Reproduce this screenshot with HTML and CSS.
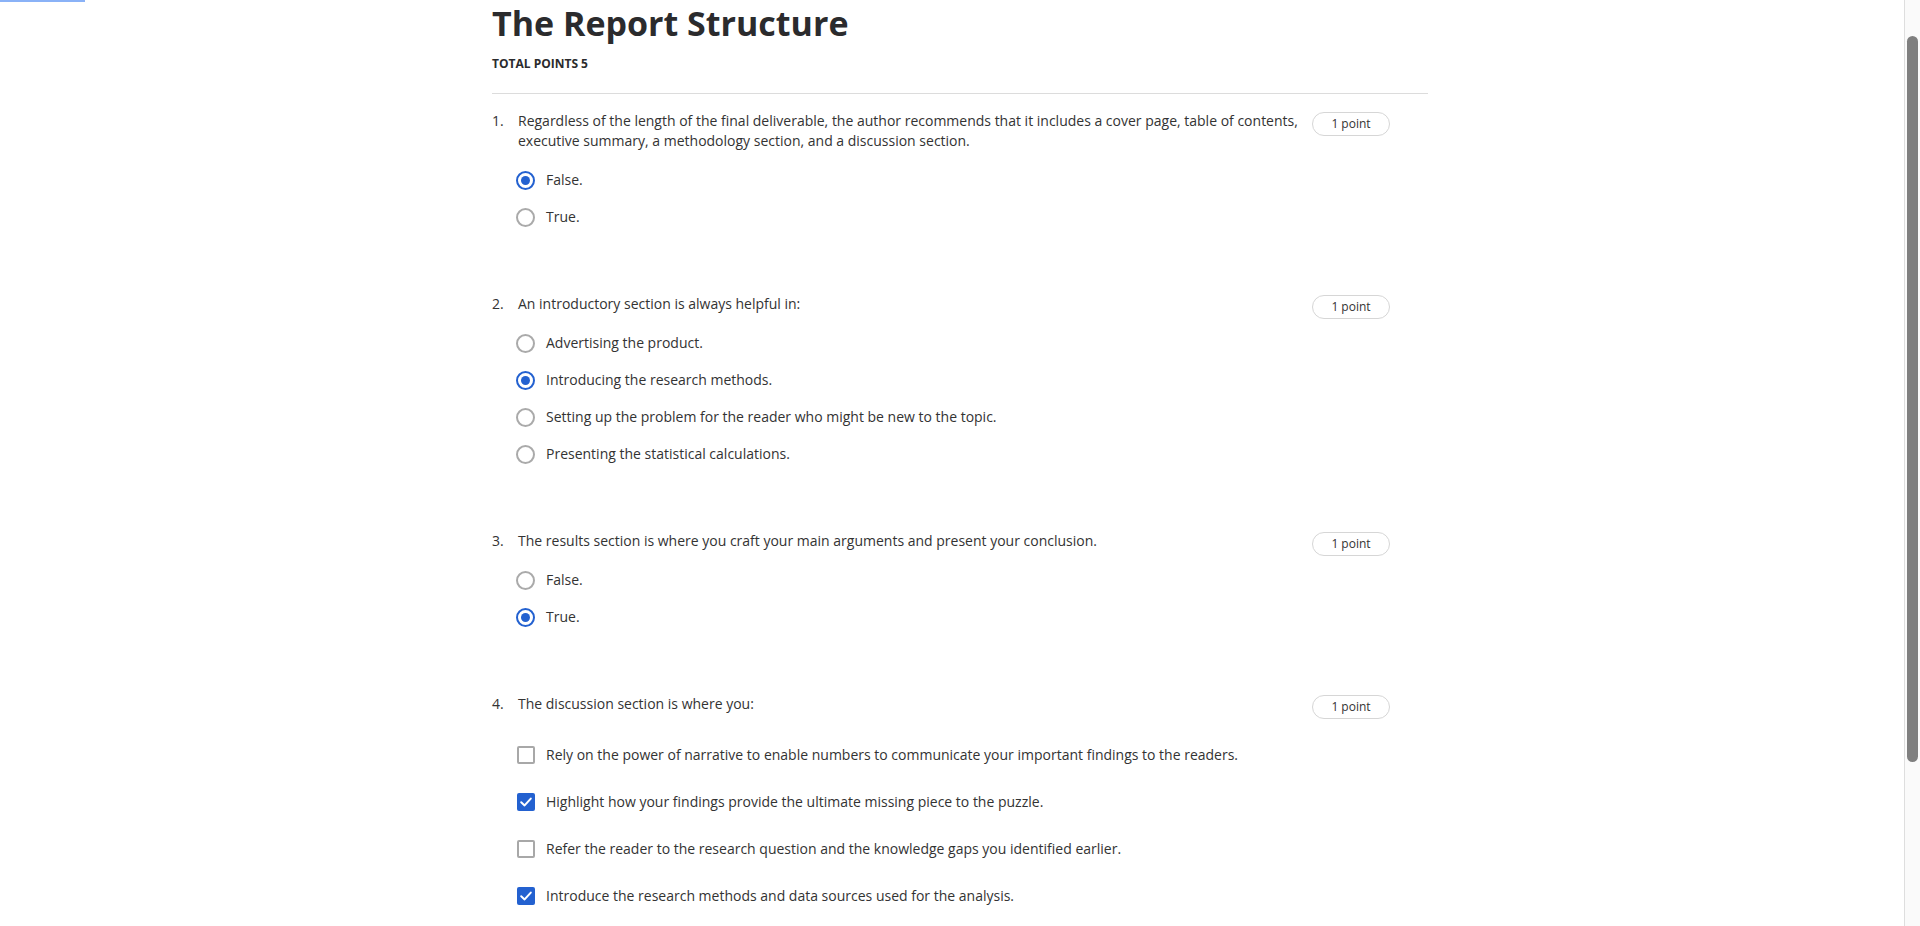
FILE: index.html
```html
<!DOCTYPE html>
<html lang="en">
<head>
<meta charset="utf-8">
<title>The Report Structure</title>
<link rel="stylesheet" href="styles.css">
</head>
<body>
<div class="focus-bar"></div>
<main class="quiz">
  <header class="quiz-head">
    <h1 class="quiz-title">The Report Structure</h1>
    <div class="quiz-total">TOTAL POINTS 5</div>
  </header>

  <section class="question">
    <div class="q-row">
      <span class="q-num">1.</span>
      <p class="q-text">Regardless of the length of the final deliverable, the author recommends that it includes a cover page, table of contents, executive summary, a methodology section, and a discussion section.</p>
      <span class="pill">1 point</span>
    </div>
    <ul class="options">
      <li class="option"><span class="radio checked"></span><span>False.</span></li>
      <li class="option"><span class="radio"></span><span>True.</span></li>
    </ul>
  </section>

  <section class="question">
    <div class="q-row">
      <span class="q-num">2.</span>
      <p class="q-text">An introductory section is always helpful in:</p>
      <span class="pill">1 point</span>
    </div>
    <ul class="options">
      <li class="option"><span class="radio"></span><span>Advertising the product.</span></li>
      <li class="option"><span class="radio checked"></span><span>Introducing the research methods.</span></li>
      <li class="option"><span class="radio"></span><span>Setting up the problem for the reader who might be new to the topic.</span></li>
      <li class="option"><span class="radio"></span><span>Presenting the statistical calculations.</span></li>
    </ul>
  </section>

  <section class="question">
    <div class="q-row">
      <span class="q-num">3.</span>
      <p class="q-text">The results section is where you craft your main arguments and present your conclusion.</p>
      <span class="pill">1 point</span>
    </div>
    <ul class="options">
      <li class="option"><span class="radio"></span><span>False.</span></li>
      <li class="option"><span class="radio checked"></span><span>True.</span></li>
    </ul>
  </section>

  <section class="question">
    <div class="q-row">
      <span class="q-num">4.</span>
      <p class="q-text">The discussion section is where you:</p>
      <span class="pill">1 point</span>
    </div>
    <ul class="options checks">
      <li class="option"><span class="checkbox"></span><span>Rely on the power of narrative to enable numbers to communicate your important findings to the readers.</span></li>
      <li class="option"><span class="checkbox checked"><svg viewBox="0 0 18 18" width="18" height="18"><path d="M4.2 9.2 L7.6 12.4 L13.8 5.6" fill="none" stroke="#fff" stroke-width="2" stroke-linecap="round" stroke-linejoin="round"/></svg></span><span>Highlight how your findings provide the ultimate missing piece to the puzzle.</span></li>
      <li class="option"><span class="checkbox"></span><span>Refer the reader to the research question and the knowledge gaps you identified earlier.</span></li>
      <li class="option"><span class="checkbox checked"><svg viewBox="0 0 18 18" width="18" height="18"><path d="M4.2 9.2 L7.6 12.4 L13.8 5.6" fill="none" stroke="#fff" stroke-width="2" stroke-linecap="round" stroke-linejoin="round"/></svg></span><span>Introduce the research methods and data sources used for the analysis.</span></li>
    </ul>
  </section>
</main>

<div class="scrollbar"><div class="thumb"></div></div>
</body>
</html>
```

FILE: styles.css
```css
html {
  overflow: hidden;
  height: 100%;
}

body {
  margin: 0;
  background: #ffffff;
  font-family: "Open Sans", "Noto Sans", sans-serif;
  color: #333333;
  font-size: 14px;
  line-height: 20px;
}

.focus-bar {
  position: absolute;
  top: 0;
  left: 0;
  width: 85px;
  height: 2px;
  background: #8ab2f7;
}

.quiz {
  width: 936px;
  margin: 0 auto;
}

.quiz-head {
  border-bottom: 1px solid #dcdcdc;
  padding-bottom: 21px;
}

.quiz-title {
  margin: 0;
  font-size: 34px;
  font-weight: 700;
  line-height: normal;
  color: #2b2b2d;
}

.quiz-total {
  margin-top: 10px;
  font-size: 12px;
  font-weight: 700;
  line-height: 16px;
  color: #2b2b2d;
}

.question {
  margin-top: 67px;
}

.question:first-of-type {
  margin-top: 17px;
}

.q-row {
  display: flex;
  align-items: flex-start;
}

.q-num {
  width: 26px;
  flex: none;
}

.q-text {
  margin: 0;
  flex: 1;
}

.pill {
  flex: none;
  margin: 1px 38px -5px 14px;
  width: 76px;
  height: 22px;
  border: 1px solid #d6d6d6;
  border-radius: 12px;
  font-size: 12px;
  line-height: 22px;
  text-align: center;
  color: #333333;
}

.options {
  list-style: none;
  margin: 19px 0 0 0;
  padding: 0 0 0 24px;
  display: flex;
  flex-direction: column;
  gap: 17px;
}

.options.checks {
  margin-top: 31px;
  gap: 27px;
}

.option {
  display: flex;
  align-items: center;
  gap: 11px;
  height: 20px;
}

.radio {
  flex: none;
  box-sizing: border-box;
  width: 19px;
  height: 19px;
  border: 2px solid #aaaaaa;
  border-radius: 50%;
  display: flex;
  align-items: center;
  justify-content: center;
}

.radio.checked {
  border: 2.5px solid #2361d0;
}

.radio.checked::after {
  content: "";
  width: 9px;
  height: 9px;
  border-radius: 50%;
  background: #2361d0;
}

.checkbox {
  flex: none;
  box-sizing: border-box;
  width: 18px;
  height: 18px;
  margin-left: 1px;
  border: 2px solid #a8a8a8;
  border-radius: 2px;
  display: flex;
  align-items: center;
  justify-content: center;
}

.checkbox.checked {
  border: none;
  background: #2361d0;
}

.checkbox svg {
  display: block;
}

.scrollbar {
  position: fixed;
  top: 0;
  right: 0;
  width: 15px;
  height: 100%;
  background: #fafafa;
  border-left: 1px solid #dedede;
}

.thumb {
  position: absolute;
  top: 36px;
  left: 2px;
  width: 11px;
  height: 726px;
  border-radius: 6px;
  background: #7f7f7f;
}
```
